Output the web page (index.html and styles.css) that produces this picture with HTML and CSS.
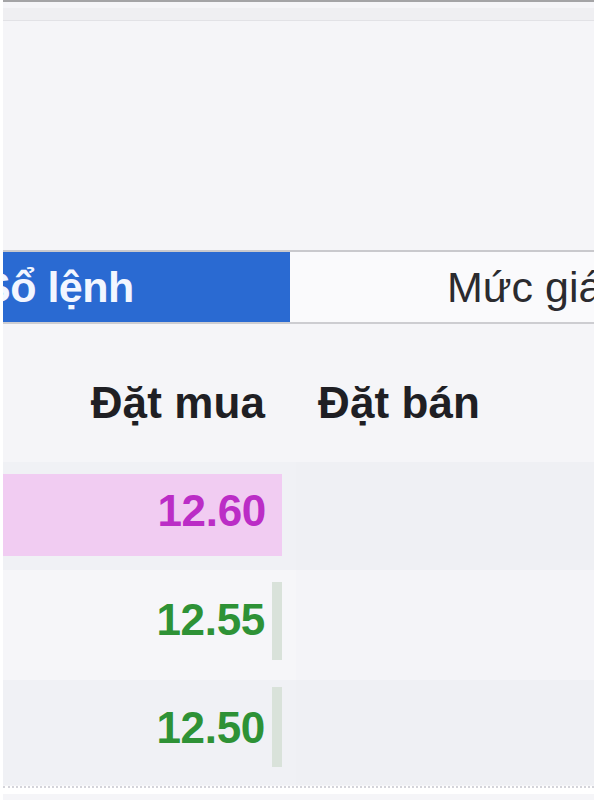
FILE: index.html
```html
<!DOCTYPE html>
<html lang="vi">
<head>
<meta charset="utf-8">
<link rel="stylesheet" href="styles.css">
</head>
<body>
<div class="frame">
  <div class="topline"></div>
  <div class="topband"></div>
  <div class="spacer"></div>
  <div class="tabs">
    <div class="tab active">Sổ lệnh</div>
    <div class="tab">Mức giá</div>
  </div>
  <div class="head">
    <div class="hcell buy">Đặt mua</div>
    <div class="hcell sell">Đặt bán</div>
  </div>
  <div class="row r1">
    <div class="cell buy"><div class="bar pink"><span class="px ceil">12.60</span></div></div>
    <div class="cell sell"></div>
  </div>
  <div class="row r2">
    <div class="cell buy"><span class="px up">12.55</span><span class="vol"></span></div>
    <div class="cell sell"></div>
  </div>
  <div class="row r3">
    <div class="cell buy"><span class="px up">12.50</span><span class="vol"></span></div>
    <div class="cell sell"></div>
  </div>
  <div class="dots"></div>
</div>
</body>
</html>
```

FILE: styles.css
```css
html, body {
  margin: 0;
  padding: 0;
  background: #ffffff;
}
.frame {
  width: 600px;
  height: 800px;
  overflow: hidden;
  background: #f5f5f8;
  font-family: "Liberation Sans", Arial, sans-serif;
  display: flex;
  flex-direction: column;
  border-left: 3px solid #ffffff;
  border-right: 6px solid #ffffff;
  box-sizing: border-box;
}
.topline {
  height: 2px;
  background: #a4a4a6;
  margin: 0 -6px 0 -3px;
}
.topband {
  height: 12px;
  margin-top: 6px;
  background: #efeff2;
  border-bottom: 1px solid #e2e2e6;
}
.spacer {
  height: 229px;
  flex: none;
}
.tabs {
  display: flex;
  height: 70px;
  flex: none;
  border-top: 2px solid #c9c9cd;
  border-bottom: 2px solid #cdcdd1;
  margin: 0 -6px 0 -3px;
  background: #fafafc;
}
.tab {
  font-size: 43px;
  line-height: 70px;
  color: #2b2b2f;
  white-space: nowrap;
}
.tab.active {
  width: 290px;
  background: #2a6ad2;
  color: #f2f6ff;
  text-indent: -18px;
  font-weight: bold;
  letter-spacing: -0.5px;
  flex: none;
}
.tab:not(.active) {
  padding-left: 157px;
}
.head {
  height: 138px;
  flex: none;
  display: flex;
  align-items: center;
  padding-top: 20px;
  box-sizing: border-box;
}
.hcell {
  font-size: 44px;
  font-weight: bold;
  color: #1f1f24;
  letter-spacing: 0.1px;
}
.hcell.buy {
  width: 262px;
  text-align: right;
}
.hcell.sell {
  padding-left: 53px;
}
.row {
  display: flex;
  flex: none;
}
.r1 { height: 108px; background: #f0f1f5; }
.r2 { height: 110px; background: #f6f6f9; }
.r3 { height: 105px; background: #f0f1f5; }
.cell.buy {
  width: 279px;
  flex: none;
  display: flex;
  align-items: center;
  justify-content: flex-end;
}
.cell.sell {
  flex: 1;
  margin-left: 14px;
  background: rgba(232, 234, 240, 0.15);
}
.bar.pink {
  width: 100%;
  height: 82px;
  margin-top: -2px;
  background: #f1ccf2;
  display: flex;
  align-items: center;
  justify-content: flex-end;
}
.px {
  font-size: 44px;
  font-weight: bold;
  letter-spacing: -0.3px;
  padding-right: 16px;
  padding-bottom: 8px;
}
.ceil { color: #bb2dc6; }
.up { color: #2e9236; }
.vol {
  width: 10px;
  height: 78px;
  background: #d9e2da;
  flex: none;
  align-self: flex-start;
  margin-top: 12px;
}
.r2 .px, .r3 .px { padding-right: 7px; padding-bottom: 10px; }
.r3 .vol { margin-top: 7px; height: 80px; }
.dots {
  height: 6px;
  border-top: 2px dotted #d4d4da;
  margin-top: 1px;
  background: #ffffff;
}
```
